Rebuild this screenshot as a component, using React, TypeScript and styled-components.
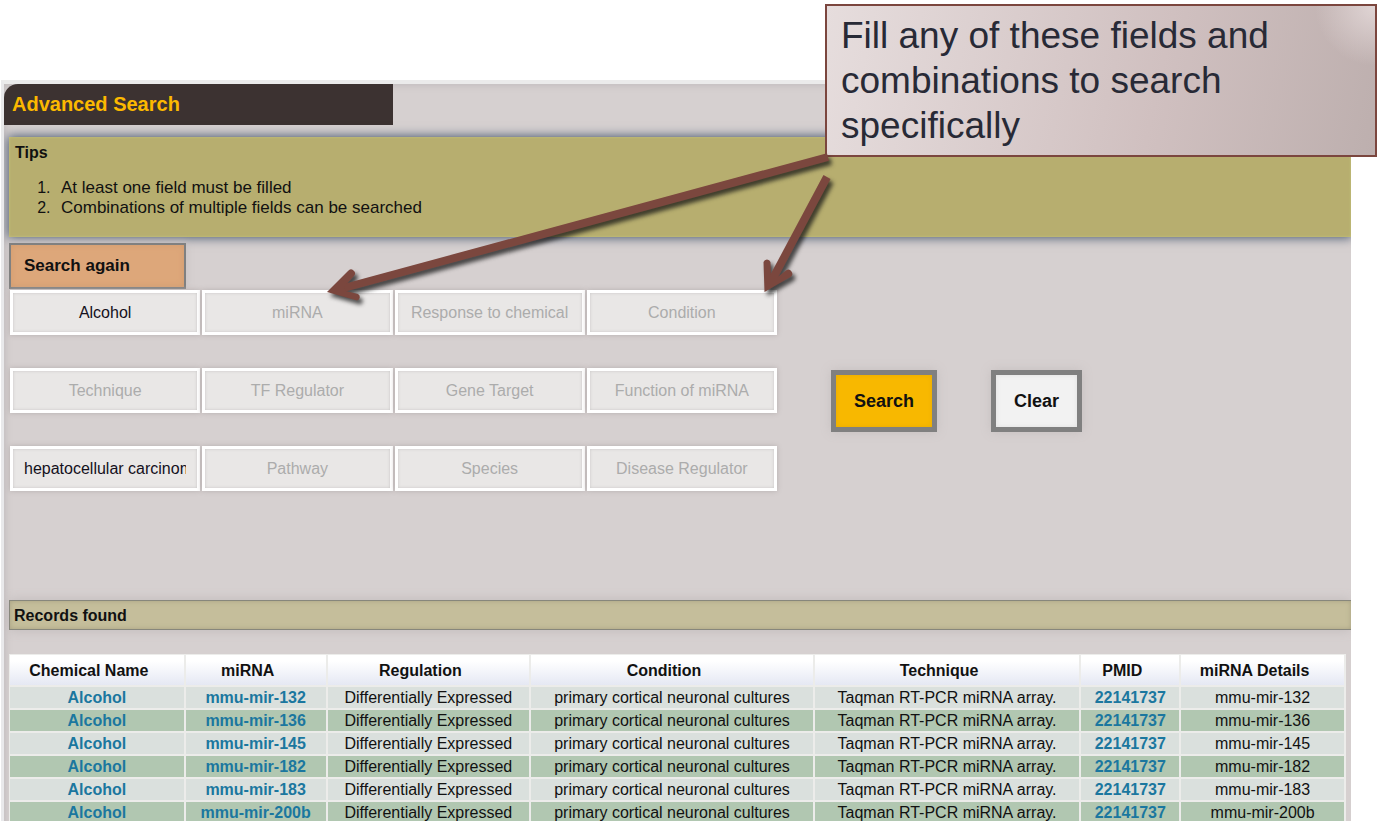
import React from "react";
import styled, { createGlobalStyle } from "styled-components";

const GlobalStyle = createGlobalStyle`
  *, *::before, *::after { box-sizing: border-box; }
  body {
    margin: 0;
    background: #fff;
    color: #111;
    font-family: "Liberation Sans", Arial, sans-serif;
    font-size: 16px;
    line-height: 20px;
  }
`;

const Page = styled.div`
  position: relative;
  min-height: 100vh;
  max-height: 100vh;
  overflow: hidden;
  padding: 80px 27px 0 1px;
`;

const Panel = styled.main`
  overflow: hidden;
  min-height: 741px;
  padding-left: 5px;
  background: #d6d0d0;
  border-top: 4px solid #ebebeb;
  border-left: 3px solid #e9e9eb;
  box-shadow: inset 4px 4px 6px -2px #c3bebf;
`;

const TitleBar = styled.header`
  width: 389px;
  max-width: 100%;
  margin: 0 0 0 -5px;
  padding: 0 8px;
  background: #3c3231;
  border-top-left-radius: 14px;
`;

const Title = styled.h1`
  margin: 0;
  color: #fcb900;
  font-size: 20px;
  line-height: 41px;
`;

const Tips = styled.section`
  height: 100px;
  margin-top: 12px;
  padding: 6px;
  background: #b7ae6f;
  box-shadow: 0 0 10px 1px #4a5a70, inset 0 0 3px #c4c47c;
`;

const SectionTitle = styled.h2`
  margin: 0;
  font-size: 16px;
  line-height: 20px;
`;

const TipList = styled.ol`
  margin: 15px 0 0;
  padding-left: 40px;
  font-size: 17px;
`;

const TipItem = styled.li`
  padding-left: 6px;
  &::marker { font-size: 16px; }
`;

const SearchForm = styled.form`
  display: flex;
  align-items: center;
  gap: 54px;
  margin-top: 1px;
`;

const Fields = styled.div`
  display: grid;
  grid-template-columns: repeat(4, 1fr);
  gap: 33px 2px;
  width: 768px;
  padding-left: 1px;
`;

const Field = styled.input`
  width: 100%;
  min-width: 0;
  height: 45px;
  padding: 0 11px;
  border: 3px solid #fff;
  border-radius: 0;
  background: #e9e7e6;
  box-shadow: 0 0 5px #b5aeae, inset 0 0 3px #c6c4c4;
  color: #14101c;
  font: 16px "Liberation Sans", Arial, sans-serif;
  text-align: center;
  &::placeholder { color: #acacac; opacity: 1; }
`;

const AgainButton = styled.button`
  display: block;
  width: 177px;
  height: 46px;
  margin-top: 6px;
  padding: 0 13px;
  border: 2px solid #808080;
  background: #dda77a;
  box-shadow: 0 0 8px #c5bfbf, inset 0 0 6px #d29c70;
  color: #111;
  font: bold 17px "Liberation Sans", Arial, sans-serif;
  text-align: left;
`;

const ActionButton = styled.button<{ $primary?: boolean }>`
  height: 62px;
  margin-top: 21px;
  padding: 0 18px;
  border: 5px solid #808080;
  background: ${(p) => (p.$primary ? "#f8b800" : "#f2f2f2")};
  box-shadow: 0 0 10px #c5bfbf, inset 0 0 5px ${(p) => (p.$primary ? "#e8ac00" : "#e0e0e0")};
  color: #111;
  font: bold 18px "Liberation Sans", Arial, sans-serif;
`;

const RecordsBar = styled.div`
  margin-top: 109px;
  padding: 5px 4px 3px;
  border: solid #87877c;
  border-width: 1px 0 1px 1px;
  background: #c5be9b;
  box-shadow: 0 0 12px #c0baba, inset 0 0 5px #a8a283;
`;

const Records = styled.table`
  width: calc(100% - 5px);
  margin-top: 24px;
  table-layout: fixed;
  border-collapse: separate;
  border-spacing: 0;
  border-left: 1px solid #ececea;
`;

const HeadCell = styled.th`
  height: 33px;
  padding: 1px 16px 0 0;
  border-right: 2px solid #ececea;
  border-top: 1px solid #ececea;
  border-bottom: 2px solid #ececea;
  background: linear-gradient(#fff 20%, #e5e8f3);
  white-space: nowrap;
`;

const Cell = styled.td`
  height: 23px;
  padding: 1px 0 0;
  border-right: 2px solid #ececea;
  border-bottom: 2px solid #ececea;
  background: #dae0dd;
  text-align: center;
  white-space: nowrap;
  tr:nth-child(even) > & { background: #b1c7b1; }
`;

const CellLink = styled.a`
  color: #1b779f;
  font-weight: bold;
  text-decoration: none;
`;

const Callout = styled.aside`
  position: absolute;
  top: 4px;
  left: 825px;
  right: 1px;
  padding: 7px 14px;
  border: 2px solid #7b463e;
  background:
    radial-gradient(circle at 100% 0, rgba(228, 217, 217, 0.9), rgba(215, 202, 202, 0) 60px),
    linear-gradient(102deg, #e6dddd, #d0c0c0 60%, #bdafae);
  color: #282a36;
  font-size: 37px;
  line-height: 45px;
`;

const CalloutText = styled.p`
  max-width: 460px;
  margin: 0;
`;

const Arrows = styled.svg`
  position: absolute;
  top: 140px;
  left: 310px;
  pointer-events: none;
  filter: drop-shadow(3px 4px 2px rgba(20, 20, 20, 0.75));
`;

const columns = [
  ["Chemical Name", 176],
  ["miRNA", 142],
  ["Regulation", 204],
  ["Condition", 284],
  ["Technique", 267],
  ["PMID", 100],
  ["miRNA Details", 165],
] as const;

const mirnas = ["132", "136", "145", "182", "183", "200b"].map((n) => `mmu-mir-${n}`);

const fields = [
  { label: "Chemical", value: "Alcohol" },
  { label: "miRNA" },
  { label: "Response to chemical" },
  { label: "Condition" },
  { label: "Technique" },
  { label: "TF Regulator" },
  { label: "Gene Target" },
  { label: "Function of miRNA" },
  { label: "Disease", value: "hepatocellular carcinoma" },
  { label: "Pathway" },
  { label: "Species" },
  { label: "Disease Regulator" },
];

export default function App() {
  return (
    <Page>
      <GlobalStyle />
      <Panel>
        <TitleBar>
          <Title>Advanced Search</Title>
        </TitleBar>
        <Tips>
          <SectionTitle>Tips</SectionTitle>
          <TipList>
            <TipItem>At least one field must be filled</TipItem>
            <TipItem>Combinations of multiple fields can be searched</TipItem>
          </TipList>
        </Tips>
        <AgainButton type="button">Search again</AgainButton>
        <SearchForm onSubmit={(e) => e.preventDefault()}>
          <Fields>
            {fields.map((f) => (
              <Field key={f.label} aria-label={f.label} placeholder={f.label} defaultValue={f.value} />
            ))}
          </Fields>
          <ActionButton $primary type="submit">Search</ActionButton>
          <ActionButton type="reset">Clear</ActionButton>
        </SearchForm>
        <RecordsBar>
          <SectionTitle>Records found</SectionTitle>
        </RecordsBar>
        <Records>
          <colgroup>
            {columns.map(([name, width]) => (
              <col key={name} style={{ width: `${(width / 1338) * 100}%` }} />
            ))}
          </colgroup>
          <thead>
            <tr>
              {columns.map(([name]) => (
                <HeadCell key={name} scope="col">{name}</HeadCell>
              ))}
            </tr>
          </thead>
          <tbody>
            {mirnas.map((m) => (
              <tr key={m}>
                <Cell><CellLink href="#alcohol">Alcohol</CellLink></Cell>
                <Cell><CellLink href={`#${m}`}>{m}</CellLink></Cell>
                <Cell>Differentially Expressed</Cell>
                <Cell>primary cortical neuronal cultures</Cell>
                <Cell>Taqman RT-PCR miRNA array.</Cell>
                <Cell><CellLink href="#22141737">22141737</CellLink></Cell>
                <Cell>{m}</Cell>
              </tr>
            ))}
          </tbody>
        </Records>
      </Panel>
      <Callout>
        <CalloutText>Fill any of these fields and combinations to search specifically</CalloutText>
      </Callout>
      <Arrows width="540" height="180" viewBox="310 140 540 180" fill="#7b473e" aria-hidden="true">
        <path d="M828 157 L342 288.500" stroke="#7b473e" strokeWidth="8" />
        <path d="M827 177 L771 282" stroke="#7b473e" strokeWidth="8" />
        <path d="M327 292 L348 271 A3.700 3.700 0 0 1 354 276 L344 287 L346 291 L358 294 A3.500 3.500 0 0 1 357 300.500 Z" />
        <path d="M764.500 292 L763.500 262 A3.700 3.700 0 0 1 770.500 262 L771 277 L775 279 L786 270.500 A3.700 3.700 0 0 1 790.500 277 Z" />
      </Arrows>
    </Page>
  );
}
